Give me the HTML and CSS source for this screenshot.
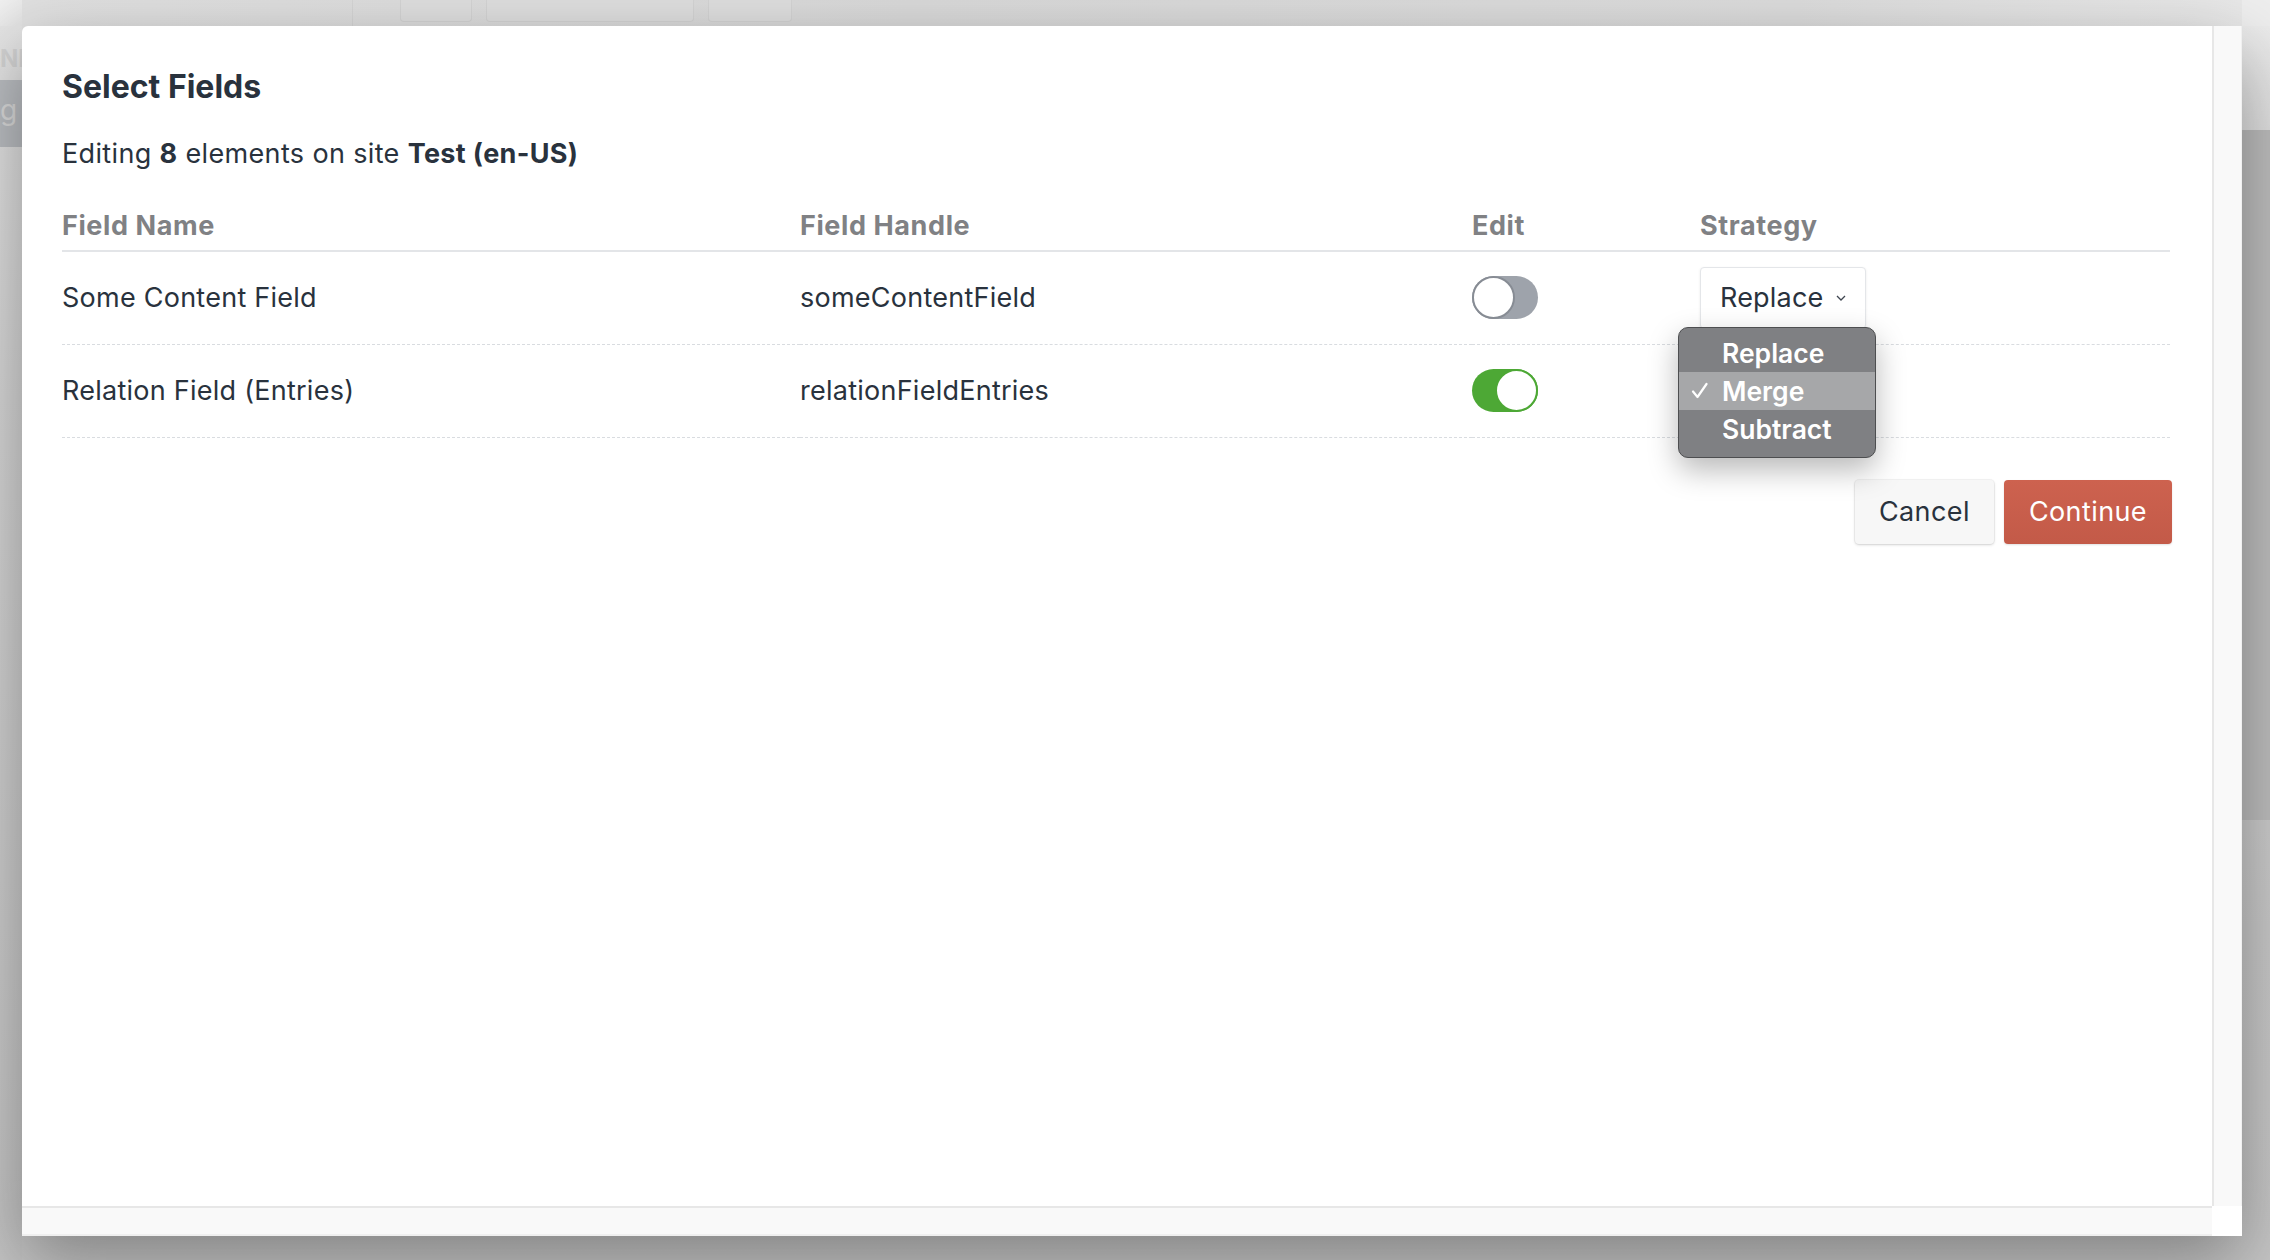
FILE: index.html
```html
<!DOCTYPE html>
<html lang="en">
<head>
    <meta charset="UTF-8">
    <meta name="viewport" content="width=device-width, initial-scale=1.0">
    <title>Select Fields</title>
    <link rel="stylesheet" href="styles.css">
</head>
<body>
    <!-- page behind the modal overlay -->
    <div class="backdrop">
        <div class="bd-corner"></div>
        <div class="bd-top">
            <div class="bd-divider"></div>
            <div class="bd-btn bd-btn-a"></div>
            <div class="bd-btn bd-btn-b"></div>
            <div class="bd-btn bd-btn-c"></div>
        </div>
        <div class="bd-top-end"></div>
        <div class="bd-left">
            <div class="bd-label">NI</div>
            <div class="bd-tab">g</div>
        </div>
        <div class="bd-center"></div>
        <div class="bd-right">
            <div class="bd-panel"></div>
        </div>
    </div>

    <div class="modal">
        <div class="modal-body">
            <h1>Select Fields</h1>
            <p class="intro">Editing <strong>8</strong> elements on site <strong>Test (en-US)</strong></p>

            <table class="fields">
                <thead>
                    <tr>
                        <th class="col-name">Field Name</th>
                        <th class="col-handle">Field Handle</th>
                        <th class="col-edit">Edit</th>
                        <th>Strategy</th>
                    </tr>
                </thead>
                <tbody>
                    <tr>
                        <td>Some Content Field</td>
                        <td>someContentField</td>
                        <td><span class="lightswitch"><span class="knob"></span></span></td>
                        <td>
                            <div class="select-wrap">
                                <div class="select">
                                    <span>Replace</span>
                                    <svg class="chevron" width="10" height="6" viewBox="0 0 10 6"><path d="M1 1l4 4 4-4" fill="none" stroke="#3f4650" stroke-width="1.3"/></svg>
                                </div>
                                <ul class="menu">
                                    <li>Replace</li>
                                    <li class="active">
                                        <svg class="check" width="17" height="17" viewBox="0 0 17 17"><path d="M2 9.5l4.5 5.5L15.5 2" fill="none" stroke="#ffffff" stroke-width="2.2" stroke-linecap="round" stroke-linejoin="round"/></svg>
                                        Merge
                                    </li>
                                    <li>Subtract</li>
                                </ul>
                            </div>
                        </td>
                    </tr>
                    <tr>
                        <td>Relation Field (Entries)</td>
                        <td>relationFieldEntries</td>
                        <td><span class="lightswitch on"><span class="knob"></span></span></td>
                        <td></td>
                    </tr>
                </tbody>
            </table>

            <div class="buttons">
                <button class="btn">Cancel</button>
                <button class="btn submit">Continue</button>
            </div>
        </div>
        <div class="vscroll"></div>
        <div class="hscroll"></div>
        <div class="scroll-corner"></div>
    </div>
</body>
</html>
```

FILE: styles.css
```css
* {
    margin: 0;
    padding: 0;
    box-sizing: border-box;
}

body {
    width: 2270px;
    height: 1260px;
    overflow: hidden;
    position: relative;
    font-family: 'Inter', 'Liberation Sans', sans-serif;
    color: #29323d;
    background-color: #d2d2d2;
}

/* ---- backdrop ---- */

.backdrop {
    height: 1260px;
    display: grid;
    grid-template-columns: 22px 1fr 28px;
    grid-template-rows: 26px 1fr;
    background: linear-gradient(180deg, #e2e2e2 0%, #d4d4d4 30%, #c6c6c6 100%);
}

.bd-corner {
    background: linear-gradient(135deg, #f0f0f0, #e2e2e2);
}

.bd-top {
    display: flex;
    align-items: flex-start;
    background: linear-gradient(90deg, #e0e0e0, #d9d9d9 40%, #dcdcdc 80%, #e8e8e8);
}

.bd-top-end {
    background: #eeeeee;
}

.bd-divider {
    width: 1px;
    height: 26px;
    margin-left: 330px;
    background: #d4d4d4;
}

.bd-btn {
    height: 22px;
    border: 1px solid #d3d3d3;
    border-top: none;
    border-radius: 0 0 4px 4px;
    background: #dedede;
}

.bd-btn-a {
    width: 72px;
    margin-left: 47px;
}

.bd-btn-b {
    width: 208px;
    margin-left: 14px;
}

.bd-btn-c {
    width: 84px;
    margin-left: 14px;
}

.bd-left {
    display: flex;
    flex-direction: column;
    background: linear-gradient(180deg, #e4e4e4 0%, #d6d6d6 30%, #c4c4c4 100%);
}

.bd-label {
    margin-top: 18px;
    height: 36px;
    font-size: 24px;
    font-weight: bold;
    color: #d2d2d2;
}

.bd-tab {
    height: 67px;
    background: #babdc1;
    color: #d8d8d8;
    font-size: 28px;
    line-height: 60px;
}

.bd-right {
    background: linear-gradient(180deg, #ececec 0, #e0e0e0 104px, #c8c8c8 900px, #c6c6c6);
}

.bd-panel {
    margin-top: 104px;
    height: 690px;
    background: #bdbdbd;
}

/* ---- modal ---- */

.modal {
    position: absolute;
    top: 26px;
    left: 22px;
    width: 2220px;
    height: 1210px;
    display: grid;
    grid-template-columns: 1fr 30px;
    grid-template-rows: 1fr 30px;
    background: #ffffff;
    border-radius: 6px 0 0 0;
    box-shadow: 0 25px 70px rgba(0, 0, 0, 0.35);
}

.modal-body {
    padding: 41px 42px 0 40px;
    overflow: hidden;
}

.vscroll {
    background: #f9f9f9;
    border-left: 2px solid #e7e7e7;
    border-right: 1px solid #f0f0f0;
}

.hscroll {
    background: #f9f9f9;
    border-top: 2px solid #e7e7e7;
    border-bottom: 2px solid #efefef;
}

.scroll-corner {
    background: #ffffff;
}

h1 {
    font-size: 32px;
    line-height: 40px;
    font-weight: 700;
    color: #29323d;
}

.intro {
    margin-top: 31px;
    font-size: 27px;
    line-height: 32px;
    letter-spacing: 0.35px;
}

.intro strong {
    font-weight: 700;
}

/* ---- table ---- */

.fields {
    margin-top: 40px;
    width: 100%;
    table-layout: fixed;
    border-collapse: collapse;
}

.fields th {
    padding: 0 0 8px;
    font-size: 27px;
    line-height: 32px;
    font-weight: 700;
    letter-spacing: 0.6px;
    text-align: left;
    color: #808184;
    border-bottom: 2px solid #e3e5e8;
}

.col-name {
    width: 738px;
}

.col-handle {
    width: 672px;
}

.col-edit {
    width: 228px;
}

.fields td {
    height: 93px;
    padding: 0;
    font-size: 27px;
    line-height: 32px;
    letter-spacing: 0.25px;
    vertical-align: middle;
    border-bottom: 1px dashed #d9dce0;
}

/* ---- lightswitch ---- */

.lightswitch {
    display: flex;
    width: 66px;
    height: 43px;
    border-radius: 22px;
    background: #9ea3ab;
}

.lightswitch .knob {
    width: 43px;
    height: 43px;
    border-radius: 50%;
    background: #ffffff;
    border: 2px solid #878c94;
}

.lightswitch.on {
    justify-content: flex-end;
    background: #4da835;
}

.lightswitch.on .knob {
    border-color: #4da835;
}

/* ---- select + native menu ---- */

.select-wrap {
    position: relative;
    width: 166px;
}

.select {
    display: flex;
    align-items: center;
    justify-content: space-between;
    height: 62px;
    padding: 0 19px 0 19px;
    background: #ffffff;
    border: 1px solid #e4e6e9;
    border-radius: 4px;
    box-shadow: 0 1px 3px rgba(0, 0, 0, 0.08);
    color: #29323d;
    letter-spacing: 0.2px;
}

.chevron {
    display: block;
}

.menu {
    position: absolute;
    top: 60px;
    left: -22px;
    width: 198px;
    padding: 6px 0 9px;
    list-style: none;
    background: #7f8083;
    border: 1px solid #4d4e50;
    border-radius: 10px;
    box-shadow: 0 12px 30px rgba(0, 0, 0, 0.28);
    color: #ffffff;
    font-weight: 600;
    font-size: 26.5px;
    letter-spacing: 0;
    z-index: 2;
}

.menu li {
    position: relative;
    height: 38px;
    line-height: 38px;
    padding-left: 43px;
}

.menu li.active {
    background: #a6a7a9;
}

.check {
    position: absolute;
    left: 12px;
    top: 10px;
}

/* ---- buttons ---- */

.buttons {
    display: flex;
    justify-content: flex-end;
    gap: 10px;
    margin-top: 42px;
    margin-right: -2px;
}

.btn {
    height: 64px;
    padding: 0 24px;
    font-family: inherit;
    font-size: 27px;
    letter-spacing: 0.4px;
    color: #29323d;
    background: #f7f7f7;
    border: none;
    border-radius: 4px;
    box-shadow: 0 0 0 1px rgba(0, 0, 0, 0.04), 0 1px 3px rgba(0, 0, 0, 0.16);
}

.btn.submit {
    padding: 0 25px;
    color: #ffffff;
    background: linear-gradient(180deg, #cd624f, #c35a48);
    box-shadow: 0 1px 2px rgba(0, 0, 0, 0.12);
}
```
